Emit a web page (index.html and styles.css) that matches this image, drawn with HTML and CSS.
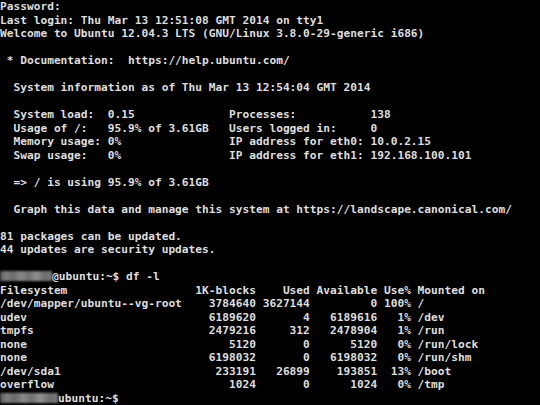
FILE: index.html
```html
<!DOCTYPE html>
<html>
<head>
<meta charset="utf-8">
<link rel="stylesheet" href="styles.css">
</head>
<body>
<pre class="term">Password:
Last login: Thu Mar 13 12:51:08 GMT 2014 on tty1
Welcome to Ubuntu 12.04.3 LTS (GNU/Linux 3.8.0-29-generic i686)

 * Documentation:  https://help.ubuntu.com/

  System information as of Thu Mar 13 12:54:04 GMT 2014

  System load:  0.15              Processes:           138
  Usage of /:   95.9% of 3.61GB   Users logged in:     0
  Memory usage: 0%                IP address for eth0: 10.0.2.15
  Swap usage:   0%                IP address for eth1: 192.168.100.101

  => / is using 95.9% of 3.61GB

  Graph this data and manage this system at https://landscape.canonical.com/

81 packages can be updated.
44 updates are security updates.

<span class="blur w8">        </span>@ubuntu:~$ df -l
Filesystem                   1K-blocks    Used Available Use% Mounted on
/dev/mapper/ubuntu--vg-root    3784640 3627144         0 100% /
udev                           6189620       4   6189616   1% /dev
tmpfs                          2479216     312   2478904   1% /run
none                              5120       0      5120   0% /run/lock
none                           6198032       0   6198032   0% /run/shm
/dev/sda1                       233191   26899    193851  13% /boot
overflow                          1024       0      1024   0% /tmp
<span class="blur w9">         </span>ubuntu:~$</pre>
</body>
</html>
```
FILE: styles.css
```css
html, body {
  margin: 0;
  padding: 0;
  background: #000;
}
body {
  width: 540px;
  height: 405px;
  overflow: hidden;
}
.term {
  margin: 0;
  padding: 0;
  font-family: "DejaVu Sans Mono", "Liberation Mono", monospace;
  font-weight: bold;
  font-size: 11.2px;
  line-height: 13.5px;
  color: #dedede;
  white-space: pre;
}
.blur {
  display: inline-block;
  height: 10px;
  vertical-align: -1px;
  background: linear-gradient(90deg, #5a5a5a 0%, #808080 12%, #6a6a6a 25%, #8a8a8a 40%, #707070 55%, #909090 70%, #6e6e6e 85%, #7a7a7a 100%);
  filter: blur(1.2px);
  color: transparent;
}
.w8 { width: 52px; }
.w9 { width: 58px; }
```
